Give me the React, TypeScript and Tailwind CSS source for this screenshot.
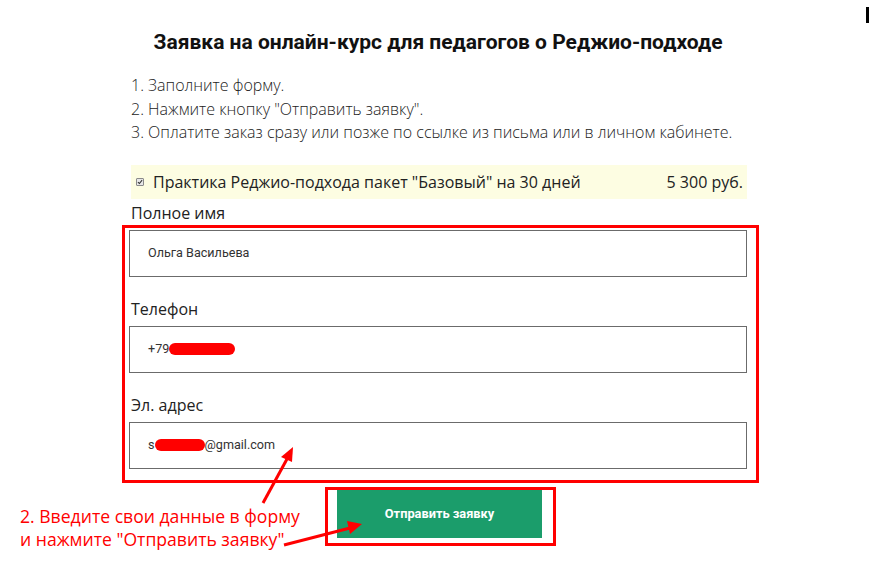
const fields = [
  { label: "Телефон", value: "phone" },
  { label: "Эл. адрес", value: "email" },
];

function Redacted({ w }: { w: string }) {
  return <span className={`inline-block h-[12px] rounded-full bg-[#ff0000] align-middle ${w}`} />;
}

function Field({ children }: { children: React.ReactNode }) {
  return (
    <div className="flex h-[47px] items-center border border-[#6b6b6b] pl-[18px] font-['Roboto',sans-serif] text-[12.6px] text-[#333]">
      {children}
    </div>
  );
}

export default function App() {
  return (
    <div className="relative h-[568px] w-[869px] overflow-hidden bg-white font-['Open_Sans',sans-serif]">
      {/* scrollbar bit at top right */}
      <div className="absolute right-0 top-[7px] h-[16px] w-[3px] bg-black" />

      <div className="ml-[129px] w-[618px] pt-[28px]">
        <h1 className="text-center font-['Roboto',sans-serif] text-[21px] font-bold leading-[28px] text-[#111]">
          Заявка на онлайн-курс для педагогов о Реджио-подходе
        </h1>

        <div className="mt-[18px] pl-[2px] text-[16px] font-light leading-[23.5px] text-[#222]">
          <p>1. Заполните форму.</p>
          <p>2. Нажмите кнопку "Отправить заявку".</p>
          <p>3. Оплатите заказ сразу или позже по ссылке из письма или в личном кабинете.</p>
        </div>

        <div className="ml-[2px] mt-[20px] flex h-[34px] items-center bg-[#fdfde2] pl-[5px] pr-[4px] text-[16px] text-[#222]">
          <span className="flex h-[8px] w-[8px] items-center justify-center rounded-[1px] border border-[#8a8a8a] bg-[#e8e8e8]">
            <svg viewBox="0 0 8 8" className="h-[6px] w-[6px]">
              <path d="M1.2 4.2 L3.2 6 L6.8 1.6" fill="none" stroke="#333" strokeWidth="1.4" />
            </svg>
          </span>
          <span className="ml-[9px] flex-1">Практика Реджио-подхода пакет "Базовый" на 30 дней</span>
          <span>5 300 руб.</span>
        </div>

        <div className="mt-[2px] pl-[2px] text-[16px] leading-[24px] text-[#222]">Полное имя</div>

        <div className="-ml-[7px] w-[637px] border-[3px] border-[#ff0000] pb-[11px] pl-[4px] pr-[9px] pt-[2px]">
          <Field>Ольга Васильева</Field>
          {fields.map((f) => (
            <div key={f.value}>
              <div className="mb-[5px] mt-[20px] pl-[2px] text-[16px] leading-[24px] text-[#222]">{f.label}</div>
              <Field>
                {f.value === "phone" ? (
                  <span className="flex items-center">
                    +79
                    <Redacted w="w-[66px]" />
                  </span>
                ) : (
                  <span className="flex items-center">
                    s
                    <Redacted w="w-[50px]" />
                    @gmail.com
                  </span>
                )}
              </Field>
            </div>
          ))}
        </div>

        <div className="ml-[196px] mt-[4px] w-[231px] border-[3px] border-[#ff0000] pb-[5px] pl-[9px] pr-[11px]">
          <button className="flex h-[48px] w-[205px] items-center justify-center bg-[#1b9d6b] font-['Roboto',sans-serif] text-[12.8px] font-bold text-white">
            Отправить заявку
          </button>
        </div>
      </div>

      {/* annotation */}
      <div className="absolute left-[20px] top-[505px] text-[17.6px] leading-[23px] text-[#ff0000]">
        <p>2. Введите свои данные в форму</p>
        <p>и нажмите "Отправить заявку"</p>
      </div>
      <svg className="pointer-events-none absolute left-0 top-0" width="869" height="568">
        <line x1="263" y1="503" x2="287" y2="459" stroke="#ff0000" strokeWidth="3" />
        <polygon points="293,447 281,457 292,462" fill="#ff0000" />
        <line x1="284" y1="545" x2="350" y2="528" stroke="#ff0000" strokeWidth="3" />
        <polygon points="362,524 347,521 350,534" fill="#ff0000" />
      </svg>
    </div>
  );
}
